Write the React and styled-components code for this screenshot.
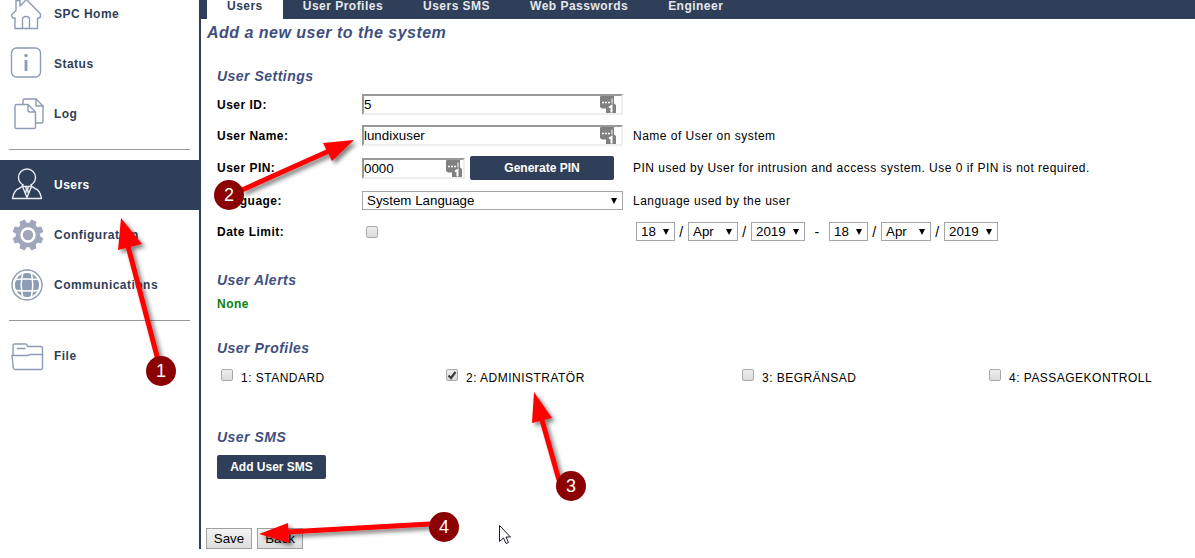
import React from "react";
import styled, { createGlobalStyle } from "styled-components";

const NAVY = "#303f59";
const ICON = "#8c9cb4";

const GlobalStyle = createGlobalStyle`
  *, *::before, *::after { box-sizing: border-box; }
  body {
    margin: 0;
    background: #fff;
    color: #000;
    font-family: "Liberation Sans", Arial, sans-serif;
    font-size: 12px;
    letter-spacing: 0.04em;
    overflow-x: hidden;
  }
  input, select, button { font-family: inherit; color: #000; }
`;

const Page = styled.div`
  position: relative;
  display: flex;
  padding-bottom: 9px;
`;

const Sidebar = styled.aside`
  flex: none;
  width: 201px;
  border-right: 2px solid ${NAVY};
`;

const Nav = styled.nav`
  margin-top: -11px;
`;

const NavItem = styled.a`
  display: flex;
  align-items: center;
  gap: 8px;
  height: 50px;
  padding-left: 10px;
  font-weight: bold;
  text-decoration: none;
  color: ${(p) => (p.$active ? "#fff" : NAVY)};
  background: ${(p) => (p.$active ? NAVY : "transparent")};
`;

const NavIcon = styled.svg`
  flex: none;
  width: 36px;
  height: 34px;
  fill: none;
  stroke: ${ICON};
  stroke-width: 1.4;
  stroke-linejoin: round;
  stroke-linecap: round;
`;

const Divider = styled.hr`
  margin: 10px 9px;
  border: 0;
  border-top: 1px solid #999;
`;

const Main = styled.main`
  flex: 1;
  min-width: 0;
`;

const TabBar = styled.nav`
  display: flex;
  padding-left: 6px;
  background: ${NAVY};
`;

const Tab = styled.a`
  padding: 0 20px 7px;
  line-height: 12px;
  font-weight: bold;
  text-decoration: none;
  color: ${(p) => (p.$active ? NAVY : "#e4e7ec")};
  background: ${(p) => (p.$active ? "#fff" : "transparent")};
`;

const Title = styled.h1`
  margin: 4px 0 0 6px;
  font-size: 16px;
  line-height: 20px;
  font-style: italic;
  color: #3f4f80;
`;

const Section = styled.section`
  padding: 23px 0 0 16px;
`;

const SectionTitle = styled.h2`
  margin: 0 0 3px;
  font-size: 14px;
  line-height: 20px;
  font-style: italic;
  color: #3f4f80;
`;

const FormRow = styled.div`
  display: grid;
  grid-template-columns: 145px 261px minmax(0, 1fr);
  align-items: center;
  min-height: 31px;
  padding: 5px 0;
`;

const FieldLabel = styled.label`
  font-weight: bold;
`;

const FieldHint = styled.span`
  padding-left: 10px;
`;

const Controls = styled.div`
  display: flex;
  align-items: center;
  gap: 5px;
`;

const Stack = styled.span`
  display: inline-grid;
  align-items: center;
  width: ${(p) => p.$width};
  & > * { grid-area: 1 / 1; }
  & > svg { justify-self: end; pointer-events: none; }
`;

const TextInput = styled.input`
  width: 100%;
  height: 21px;
  margin: 0;
  padding: 0 24px 0 0;
  border: 2px solid;
  border-color: #999 #eee #eee #999;
  background: #fff;
`;

const KeySvg = styled.svg`
  width: 16px;
  height: 17px;
  margin-right: ${(p) => p.$inset};
`;

const SelectBox = styled.select`
  appearance: none;
  width: 100%;
  height: 19px;
  margin: 0;
  padding: 0 4px;
  border: 1px solid #a6a6a6;
  border-radius: 0;
  background: #fff;
`;

const ArrowSvg = styled.svg`
  width: 6px;
  height: 6px;
  margin-right: 6px;
`;

const CheckInput = styled.input`
  appearance: none;
  width: 12px;
  height: 12px;
  margin: 0;
  border: 1px solid #a9a9a9;
  border-radius: 2px;
  background: linear-gradient(#eee, #dcdcdc);
`;

const CheckCell = styled.span`
  display: flex;
  padding-left: 4px;
`;

const ActionButton = styled.button`
  width: ${(p) => p.$width};
  height: 24px;
  padding: 0;
  border: 0;
  border-radius: 2px;
  background: ${NAVY};
  color: #fff;
  font-size: 12px;
  font-weight: bold;
`;

const SmsAction = styled.div`
  padding-top: 5px;
`;

const DateGroup = styled.div`
  display: flex;
  align-items: center;
  padding-left: 13px;
`;

const Separator = styled.span`
  flex: none;
  width: ${(p) => (p.$wide ? "24px" : "13px")};
  font-size: 14px;
  line-height: 16px;
  text-align: center;
`;

const AlertText = styled.p`
  margin: 0;
  line-height: 22px;
  font-weight: bold;
  color: #0a800a;
`;

const ProfileList = styled.div`
  display: grid;
  grid-template-columns: 225fr 296fr 247fr 210fr;
  padding: 8px 0 19px;
`;

const ProfileOption = styled.label`
  display: flex;
  align-items: flex-start;
  gap: 8px;
  padding: 0 0 0 4px;
  line-height: 14px;
  white-space: nowrap;
`;

const ProfileName = styled.span`
  padding-top: 2px;
`;

const FormActions = styled.div`
  display: flex;
  gap: 5px;
  padding: 49px 0 0 5px;
`;

const PlainButton = styled.button`
  width: 46px;
  height: 21px;
  padding: 0;
  border: 1px solid #a0a0a0;
  background: linear-gradient(#f4f4f4, #dedede);
`;

const Annotations = styled.svg`
  position: absolute;
  top: 0;
  left: 0;
  width: 100%;
  height: 100%;
  overflow: hidden;
  pointer-events: none;
`;

const StepNumber = styled.text`
  fill: #fff;
  font-size: 18px;
  letter-spacing: 0;
  text-anchor: middle;
`;

const icons = {
  home: (
    <>
      <path d="M5 31.500V21H2.500L1.500 18 6 13.500V3.500H10V9L16.500 2.500 30.500 17V20L27.500 21.500V31.500Z" />
      <path d="M12.500 31V22.500Q12.500 19.500 16 19.500T19.500 22.500V31" />
    </>
  ),
  status: (
    <>
      <rect x="1.500" y="1" width="29" height="29" rx="5" />
      <path d="M16 13V24" strokeWidth="2.800" strokeLinecap="butt" />
      <circle cx="16" cy="8.500" r="1.700" fill={ICON} stroke="none" />
    </>
  ),
  log: (
    <>
      <path d="M13 7V3.500Q13 2 14.500 2H26L33 9V24.500Q33 26 31.500 26H26" />
      <path d="M26 2V9H33" />
      <path d="M18 7.500H6.500Q5 7.500 5 9V30Q5 31.500 6.500 31.500H24Q25.500 31.500 25.500 30V15L18 7.500V13Q18 15 20 15H25.500" />
    </>
  ),
  users: (
    <g stroke="#e9edf3">
      <path d="M13 17Q8.500 14 8.500 9.500A8.500 8.500 0 0 1 25.500 9.500Q25.500 14 21 17" />
      <path d="M13 17Q12.500 19 9 20.500Q4 22 2.500 30.500H31.500Q30 22 25 20.500Q21.500 19 21 17" />
      <path d="M12.500 18.500L17 29.500 21.500 18.500M14 18.500H20M15.500 18.500L16.500 21 15.500 26M18.500 18.500L17.500 21 18.500 26" />
    </g>
  ),
  configuration: (
    <g fill="#a1a7ba" stroke="none">
      <circle cx="18" cy="17" r="10" fill="none" stroke="#a1a7ba" strokeWidth="4.500" />
      <circle cx="18" cy="17" r="5.200" />
      {[22.5, 67.5, 112.5, 157.5, 202.5, 247.5, 292.5, 337.5].map((a) => (
        <path key={a} d="M14.500 6L15.200 1.500H20.800L21.500 6Z" transform={`rotate(${a} 18 17)`} />
      ))}
    </g>
  ),
  communications: (
    <>
      <circle cx="17" cy="17" r="15" />
      <circle cx="17" cy="17" r="12" fill={ICON} stroke="none" />
      <g stroke="#fff" strokeWidth="1.500">
        <path d="M5 11.500Q17 10.500 29 11.500M5 22.500Q17 23.500 29 22.500" />
        <path d="M13 4Q9.500 17 13 30M21 4Q24.500 17 21 30" />
      </g>
    </>
  ),
  file: (
    <>
      <path d="M3 16V6.500Q3 5 4.500 5H16Q17 5 17.500 7.500H31Q32.500 7.500 32.500 9V17M7.500 9.500H15" />
      <path d="M2 16.500H18Q19 16.500 19.500 15.500H32.500V29.500Q32.500 30.500 31 30.500H5Q3.500 30.500 3.300 29Z" />
    </>
  ),
};

const navGroups = [
  [["home", "SPC Home"], ["status", "Status"], ["log", "Log"]],
  [["users", "Users"], ["configuration", "Configuration"], ["communications", "Communications"]],
  [["file", "File"]],
];

const tabs = ["Users", "User Profiles", "Users SMS", "Web Passwords", "Engineer"];

const profiles = ["1: STANDARD", "2: ADMINISTRATÖR", "3: BEGRÄNSAD", "4: PASSAGEKONTROLL"];

function KeyInput({ id, value, width, inset }) {
  return (
    <Stack $width={width}>
      <TextInput id={id} type="text" defaultValue={value} />
      <KeySvg $inset={inset} viewBox="0 0 16 17" aria-hidden="true">
        <path d="M0 1Q0 0 1 0H14V7.500L16 9V17H6V12.500H2L0 11Z" fill="#808080" />
        <path d="M2 6.500H4M5 6.500H7M8 6.500H10" stroke="#fff" strokeWidth="1.600" />
        <path d="M12 2.500V7.500" stroke="#fff" />
        <path d="M9 11.500L11.500 10V16.500" fill="none" stroke="#fff" strokeWidth="2" />
      </KeySvg>
    </Stack>
  );
}

function Dropdown({ id, label, value, width }) {
  return (
    <Stack $width={width}>
      <SelectBox id={id} aria-label={label} defaultValue={value}>
        <option>{value}</option>
      </SelectBox>
      <ArrowSvg viewBox="0 0 6 6" aria-hidden="true">
        <path d="M0 0H6L3 6Z" />
      </ArrowSvg>
    </Stack>
  );
}

function CheckBox({ id, checked }) {
  const [on, setOn] = React.useState(Boolean(checked));
  return (
    <Stack $width="12px">
      <CheckInput id={id} type="checkbox" checked={on} onChange={() => setOn(!on)} />
      {on && (
        <svg width="12" height="12" viewBox="0 0 12 12" aria-hidden="true">
          <path d="M2.500 6.500L5 9 9.500 3" fill="none" stroke="#3c3c3c" strokeWidth="2.200" />
        </svg>
      )}
    </Stack>
  );
}

function DateFields({ name }) {
  return (
    <>
      <Dropdown label={`${name} day`} value="18" width="39px" />
      <Separator>/</Separator>
      <Dropdown label={`${name} month`} value="Apr" width="50px" />
      <Separator>/</Separator>
      <Dropdown label={`${name} year`} value="2019" width="54px" />
    </>
  );
}

const steps = [
  { n: 1, cx: 161, cy: 371, shaft: "M158 360L128 246", head: "121,218 142,244 118,250" },
  { n: 2, cx: 229, cy: 195, shaft: "M242 190L329 151", head: "354,140 332,161 323,143" },
  { n: 3, cx: 571, cy: 486, shaft: "M559 480L542 420", head: "534,392 552,418 532,423" },
  { n: 4, cx: 444, cy: 527, shaft: "M430 524L287 532", head: "259,534 288,523 289,543" },
];

export default function App() {
  return (
    <>
      <GlobalStyle />
      <Page>
        <Sidebar>
          <Nav aria-label="Main">
            {navGroups.map((group, i) => (
              <React.Fragment key={i}>
                {i > 0 && <Divider />}
                {group.map(([key, text]) => (
                  <NavItem key={key} href="#" $active={key === "users"}>
                    <NavIcon viewBox="0 0 36 34" aria-hidden="true">{icons[key]}</NavIcon>
                    {text}
                  </NavItem>
                ))}
              </React.Fragment>
            ))}
          </Nav>
        </Sidebar>

        <Main>
          <TabBar aria-label="User pages">
            {tabs.map((t, i) => (
              <Tab key={t} href="#" $active={i === 0}>{t}</Tab>
            ))}
          </TabBar>
          <Title>Add a new user to the system</Title>

          <Section>
            <SectionTitle>User Settings</SectionTitle>
            <FormRow>
              <FieldLabel htmlFor="user-id">User ID:</FieldLabel>
              <KeyInput id="user-id" value="5" width="100%" inset="7px" />
            </FormRow>
            <FormRow>
              <FieldLabel htmlFor="user-name">User Name:</FieldLabel>
              <KeyInput id="user-name" value="lundixuser" width="100%" inset="7px" />
              <FieldHint>Name of User on system</FieldHint>
            </FormRow>
            <FormRow>
              <FieldLabel htmlFor="user-pin">User PIN:</FieldLabel>
              <Controls>
                <KeyInput id="user-pin" value="0000" width="103px" inset="3px" />
                <ActionButton type="button" $width="144px">Generate PIN</ActionButton>
              </Controls>
              <FieldHint>
                PIN used by User for intrusion and access system. Use 0 if PIN is not required.
              </FieldHint>
            </FormRow>
            <FormRow>
              <FieldLabel htmlFor="language">Language:</FieldLabel>
              <Dropdown id="language" label="Language" value="System Language" width="100%" />
              <FieldHint>Language used by the user</FieldHint>
            </FormRow>
            <FormRow>
              <FieldLabel htmlFor="date-limit">Date Limit:</FieldLabel>
              <CheckCell><CheckBox id="date-limit" /></CheckCell>
              <DateGroup>
                <DateFields name="Start" />
                <Separator $wide>-</Separator>
                <DateFields name="End" />
              </DateGroup>
            </FormRow>
          </Section>

          <Section>
            <SectionTitle>User Alerts</SectionTitle>
            <AlertText>None</AlertText>
          </Section>

          <Section>
            <SectionTitle>User Profiles</SectionTitle>
            <ProfileList>
              {profiles.map((name, i) => (
                <ProfileOption key={name} htmlFor={`profile-${i + 1}`}>
                  <CheckBox id={`profile-${i + 1}`} checked={i === 1} />
                  <ProfileName>{name}</ProfileName>
                </ProfileOption>
              ))}
            </ProfileList>
          </Section>

          <Section>
            <SectionTitle>User SMS</SectionTitle>
            <SmsAction>
              <ActionButton type="button" $width="109px">Add User SMS</ActionButton>
            </SmsAction>
          </Section>

          <FormActions>
            <PlainButton type="submit">Save</PlainButton>
            <PlainButton type="button">Back</PlainButton>
          </FormActions>
        </Main>

        <Annotations>
          <defs>
            <filter id="arrow-shadow" x="-20%" y="-20%" width="150%" height="150%">
              <feDropShadow dx="3" dy="3" stdDeviation="2" floodColor="#000" floodOpacity="0.5" />
            </filter>
          </defs>
          {steps.map((s) => (
            <g key={s.n}>
              <g filter="url(#arrow-shadow)">
                <path d={s.shaft} stroke="#f00" strokeWidth="5" />
                <polygon points={s.head} fill="#f00" />
              </g>
              <circle cx={s.cx} cy={s.cy} r="15" fill="#8b0000" />
              <StepNumber x={s.cx} y={s.cy + 6}>{s.n}</StepNumber>
            </g>
          ))}
          <path
            d="M499.500 525.500V541.500L503.500 538 506 543.500 508.500 542.500 506 537H510.500Z"
            fill="#fff"
            stroke="#1a1a2a"
          />
        </Annotations>
      </Page>
    </>
  );
}
